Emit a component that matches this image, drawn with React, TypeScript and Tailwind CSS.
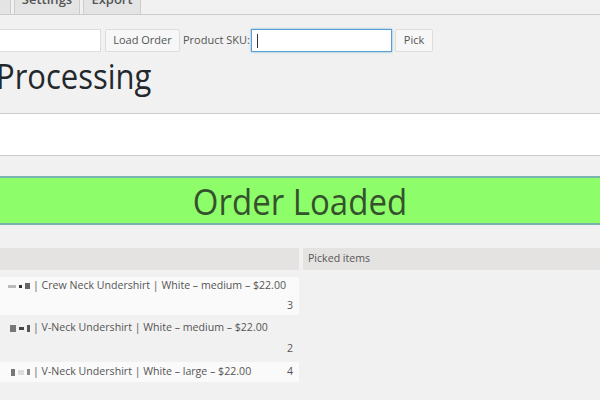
function Blur({ cells }: { cells: string[] }) {
  return (
    <span className="inline-flex items-center justify-end gap-[3px] w-[33px] pr-[3px] shrink-0">
      {cells.map((c, i) => (
        <span key={i} className={c}></span>
      ))}
    </span>
  )
}

function Product({ blur, name }: { blur: string[]; name: string }) {
  return (
    <div className="flex items-center h-[18px]">
      <Blur cells={blur} />
      <span>| {name}</span>
    </div>
  )
}

export default function App() {
  return (
    <div className="w-[600px] h-[400px] overflow-hidden bg-[#f1f1f1] text-[#555] font-['Open_Sans',sans-serif]">
      <div className="h-[14px] flex items-end gap-[3px] overflow-hidden">
        <div className="w-[11px] h-[30px] bg-[#e4e4e4] border border-l-0 border-b-0 border-[#ccc]"></div>
        <div className="w-[66px] h-[30px] bg-[#e4e4e4] border border-b-0 border-[#ccc] flex items-end justify-center pb-[5px] text-[13px] leading-[20px] font-semibold">
          Settings
        </div>
        <div className="w-[58px] h-[30px] bg-[#e4e4e4] border border-b-0 border-[#ccc] flex items-end justify-center pb-[5px] text-[13px] leading-[20px] font-semibold">
          Export
        </div>
      </div>
      <div className="h-px bg-[#ccc]"></div>

      <div className="mt-[14px] flex items-center h-[23px] text-[11px]">
        <div className="w-[102px] -ml-[1px] h-full bg-white border border-[#ddd]"></div>
        <button className="ml-[4px] w-[75px] h-full bg-[#f7f7f7] border border-[#ddd] rounded-[2px] text-[#555]">
          Load Order
        </button>
        <span className="ml-[3px] w-[68px]">Product SKU:</span>
        <div className="w-[141px] h-full bg-white border border-[#5b9dd9] shadow-[0_0_2px_rgba(30,140,190,0.6)] flex items-center pl-[5px]">
          <span className="w-px h-[14px] bg-[#333]"></span>
        </div>
        <button className="ml-[3px] w-[38px] h-full bg-[#f7f7f7] border border-[#ddd] rounded-[2px] text-[#555]">
          Pick
        </button>
      </div>

      <h1 className="mt-[1px] -ml-[4px] h-[40px] text-[31px] leading-[40px] text-[#23282d] scale-y-[1.12] origin-top-left">
        Processing
      </h1>

      <div className="mt-[20px] h-[43px] bg-white border-y border-[#ccc]"></div>

      <div className="mt-[20px] h-[49px] bg-[#8efd6a] border-y-2 border-[#79b3b0] flex items-center justify-center">
        <span className="text-[33px] leading-none text-[#35522d] font-medium scale-y-[1.12]">Order Loaded</span>
      </div>

      <div className="mt-[23px] grid grid-cols-[299px_297px] gap-[4px] text-[10.6px]">
        <div>
          <div className="h-[22px] bg-[#e5e3e1]"></div>
          <div className="mt-[7px] h-[38px] bg-[#fafafa] pr-[6px]">
            <Product
              blur={['w-[8px] h-[3px] bg-[#bbb]', 'w-[3px] h-[3px] bg-[#333]', 'w-[5px] h-[6px] bg-[#666]']}
              name="Crew Neck Undershirt | White – medium – $22.00"
            />
            <div className="mt-[2px] h-[18px] flex items-center justify-end">3</div>
          </div>
          <div className="h-[47px] pt-[4px] pr-[6px]">
            <Product
              blur={['w-[6px] h-[7px] bg-[#777]', 'w-[5px] h-[3px] bg-[#444]', 'w-[3px] h-[7px] bg-[#555]']}
              name="V-Neck Undershirt | White – medium – $22.00"
            />
            <div className="mt-[3px] h-[18px] flex items-center justify-end">2</div>
          </div>
          <div className="h-[20px] bg-[#fafafa] pr-[6px] flex items-center">
            <Product
              blur={['w-[4px] h-[7px] bg-[#777]', 'w-[6px] h-[5px] bg-[#ddd]', 'w-[3px] h-[6px] bg-[#888]']}
              name="V-Neck Undershirt | White – large – $22.00"
            />
            <span className="ml-auto">4</span>
          </div>
        </div>
        <div>
          <div className="h-[22px] bg-[#e5e3e1] flex items-center px-[5px]">Picked items</div>
        </div>
      </div>
    </div>
  )
}
